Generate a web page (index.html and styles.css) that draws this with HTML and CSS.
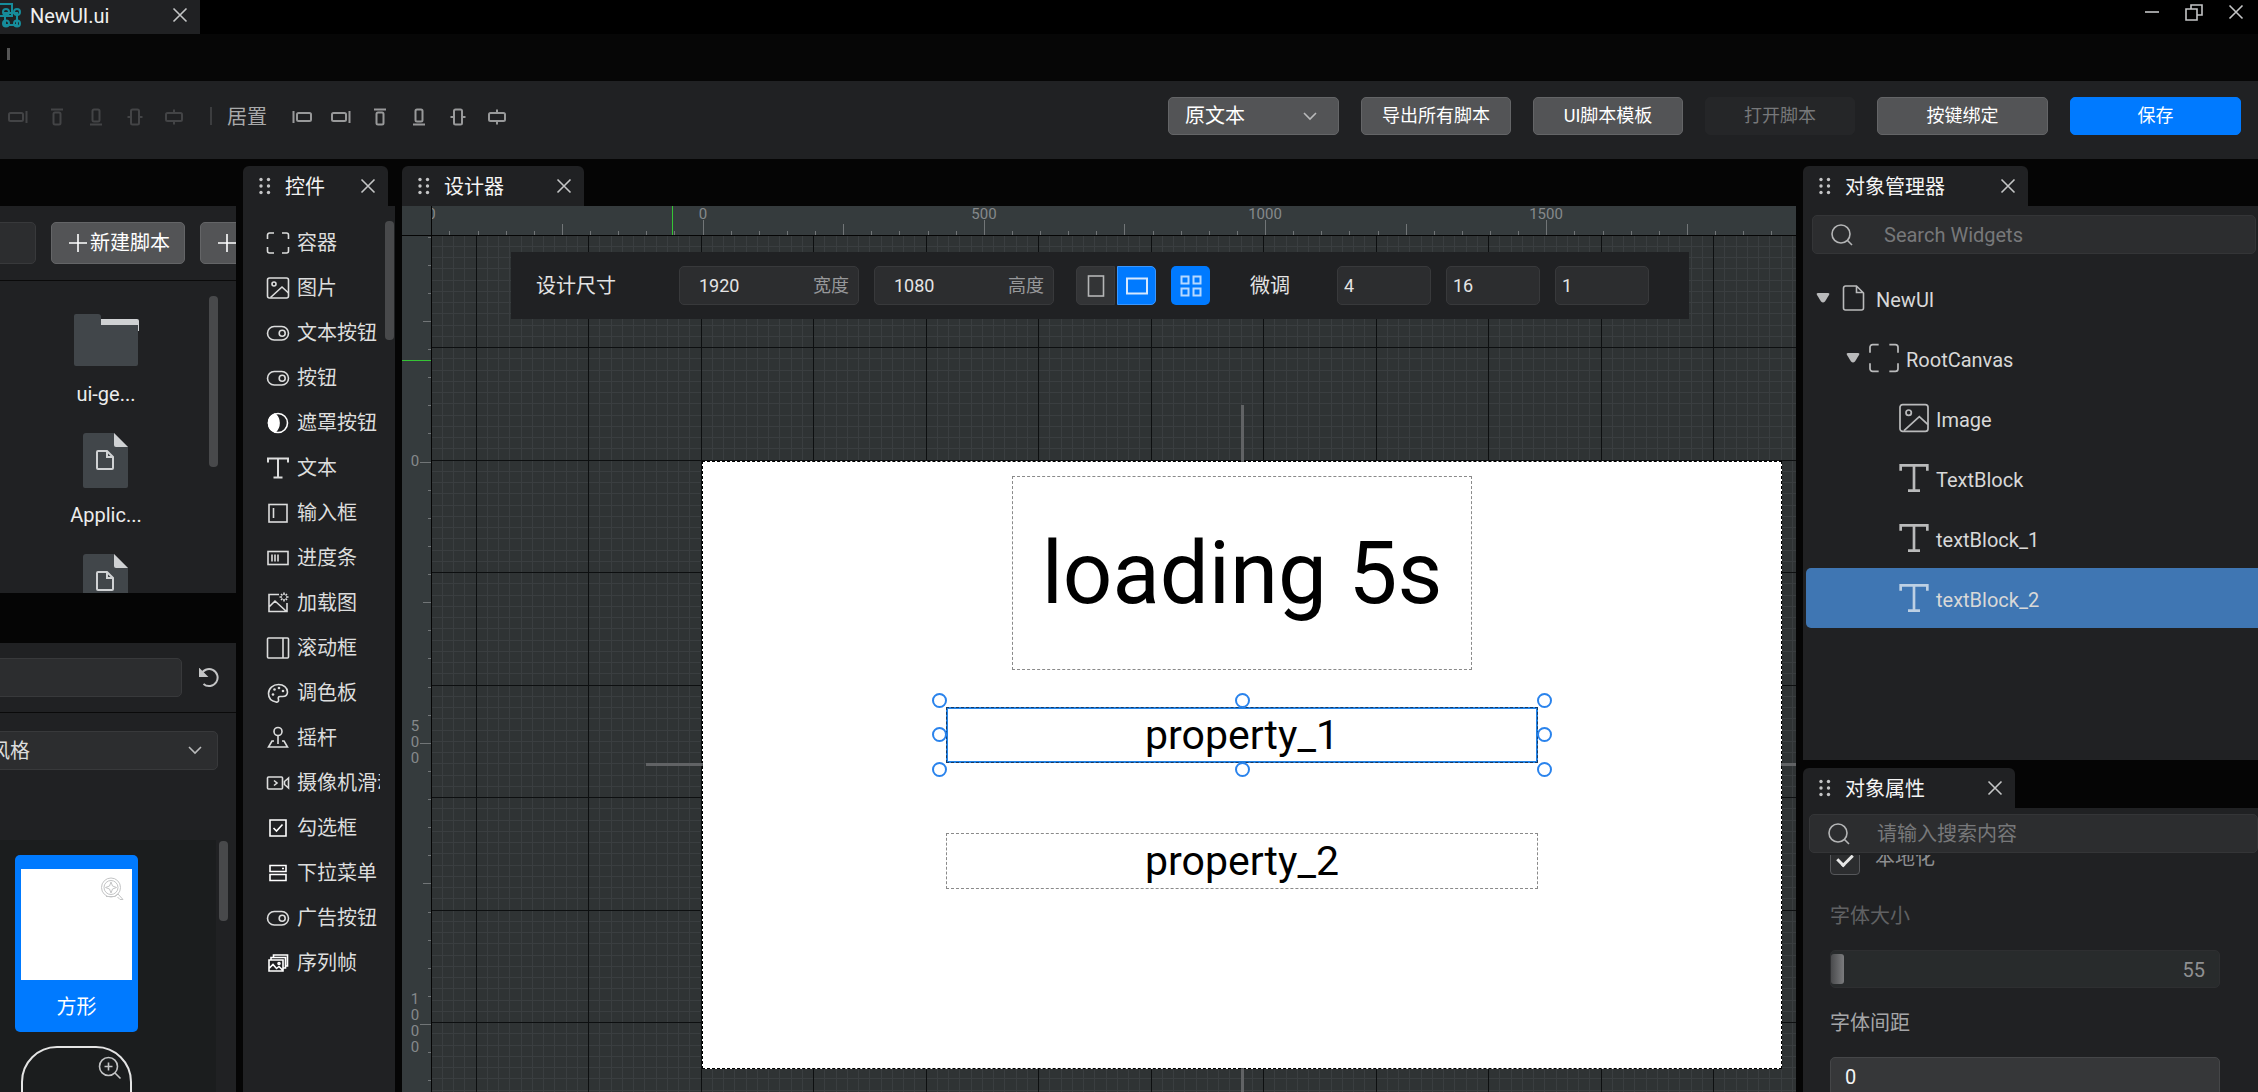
FILE: index.html
```html
<!DOCTYPE html>
<html lang="zh-CN">
<head>
<meta charset="utf-8">
<meta name="viewport" content="width=device-width, initial-scale=1">
<title>NewUI.ui</title>
<link rel="stylesheet" href="styles.css">
</head>
<body>
<svg class="sprite" aria-hidden="true">
  <symbol id="i-close" viewBox="0 0 16 16"><path d="M1.500 1.500l13 13M14.500 1.500l-13 13"/></symbol>
  <symbol id="i-grip" viewBox="0 0 12 18"><g fill="currentColor" stroke="none"><circle cx="2" cy="2.500" r="1.700"/><circle cx="9.500" cy="2.500" r="1.700"/><circle cx="2" cy="9" r="1.700"/><circle cx="9.500" cy="9" r="1.700"/><circle cx="2" cy="15.500" r="1.700"/><circle cx="9.500" cy="15.500" r="1.700"/></g></symbol>
  <symbol id="i-chevron" viewBox="0 0 16 16"><path d="M2 5l6 6 6-6"/></symbol>
  <symbol id="i-search" viewBox="0 0 24 24"><circle cx="11" cy="11" r="9"/><path d="M17.500 17.500l4.500 4.500"/></symbol>
  <symbol id="i-plus" viewBox="0 0 20 20"><path d="M10 1v18M1 10h18"/></symbol>
  <symbol id="i-left" viewBox="0 0 20 20"><path d="M1.500 4v12"/><rect x="5" y="6" width="14" height="8" rx="1.500"/></symbol>
  <symbol id="i-right" viewBox="0 0 20 20"><path d="M18.500 4v12"/><rect x="1" y="6" width="14" height="8" rx="1.500"/></symbol>
  <symbol id="i-top" viewBox="0 0 20 20"><path d="M4 2.500h12"/><rect x="6.500" y="5.500" width="7" height="12" rx="1.500"/></symbol>
  <symbol id="i-bottom" viewBox="0 0 20 20"><path d="M4 17.500h12"/><rect x="6.500" y="2.500" width="7" height="12" rx="1.500"/></symbol>
  <symbol id="i-hcenter" viewBox="0 0 20 20"><path d="M2.500 10H6M14 10h3.500"/><rect x="6" y="2.500" width="8" height="15" rx="1.500"/></symbol>
  <symbol id="i-vcenter" viewBox="0 0 20 20"><path d="M10 2.500V6M10 14v3.500"/><rect x="2" y="6" width="16" height="8" rx="1.500"/></symbol>
  <symbol id="i-frame" viewBox="0 0 24 24"><path d="M1.500 8V4a2 2 0 0 1 2-2H8M16 2h4.500a2 2 0 0 1 2 2v4M22.500 16v4a2 2 0 0 1-2 2H16M8 22H3.500a2 2 0 0 1-2-2v-4"/></symbol>
  <symbol id="i-image" viewBox="0 0 24 24"><rect x="1.500" y="2" width="21" height="20" rx="2"/><circle cx="8" cy="8" r="2"/><path d="M4.500 21.500L16 11l6.500 6"/></symbol>
  <symbol id="i-toggle" viewBox="0 0 24 24"><rect x="1.500" y="5.500" width="21" height="13.500" rx="6.700"/><circle cx="16.200" cy="12.200" r="3"/></symbol>
  <symbol id="i-mask" viewBox="0 0 24 24"><circle cx="12" cy="12" r="9.500"/><path fill="currentColor" d="M9 3a9.500 9.500 0 0 0 0 18 12 12 0 0 0 0-18z"/></symbol>
  <symbol id="i-text" viewBox="0 0 24 24"><path stroke-width="2" d="M2 6.500V2.500h20v4M12 2.500v19M7.500 21.500h9"/></symbol>
  <symbol id="i-input" viewBox="0 0 24 24"><rect x="3" y="3.500" width="18" height="17.500"/><path d="M7.500 7v10"/></symbol>
  <symbol id="i-progress" viewBox="0 0 24 24"><rect x="2" y="5.500" width="20" height="13"/><path d="M6 8.500v7M9 8.500v7M12 8.500v7"/></symbol>
  <symbol id="i-loading" viewBox="0 0 24 24"><path d="M13 3.500H3V20.500h18V12M3 16l6-6 11 10M18 1.500v2.500M18 8v2.500M13.500 6h2.500M20 6h2.500M15 3l1.500 1.500M19.500 7.500L21 9M21 3l-1.500 1.500M16.500 7.500L15 9"/></symbol>
  <symbol id="i-scrollbox" viewBox="0 0 24 24"><rect x="1.500" y="2" width="21" height="20" rx="1"/><path d="M17 2v20"/></symbol>
  <symbol id="i-palette" viewBox="0 0 24 24"><path d="M10 21C5 20 2.500 16.500 2.500 12.500 2.500 7.500 7 3.500 12.500 3.500c5 0 9 3 9 7.500 0 3-2 4.500-5 4.500h-2.500c-2 0-2 1.500-1.500 3 .5 2-1 3-2.500 2.500z"/><g fill="currentColor" stroke="none"><circle cx="7" cy="13.500" r="1.300"/><circle cx="8.500" cy="8.500" r="1.300"/><circle cx="13" cy="7" r="1.300"/><circle cx="17" cy="10" r="1.300"/></g></symbol>
  <symbol id="i-stick" viewBox="0 0 24 24"><circle cx="12" cy="5.500" r="4"/><path d="M12 9.500V18M8 15H6l-3.500 6h19L18 15h-2"/></symbol>
  <symbol id="i-camera" viewBox="0 0 24 24"><rect x="1.500" y="6" width="15" height="12" rx="1"/><path d="M22.500 7l-4 3.500v3l4 3.500zM8 9.500l3 2.500-3 2.500"/></symbol>
  <symbol id="i-check" viewBox="0 0 24 24"><path d="M4 4h16v16H4zM7.500 12l3 3 6-6.500"/></symbol>
  <symbol id="i-dropdown" viewBox="0 0 24 24"><path d="M4 4.500h16v6H4zM4 13.500h16v6H4zM16 7.500h2"/></symbol>
  <symbol id="i-sequence" viewBox="0 0 24 24"><path d="M3 9h14v11H3zM5 9V6.500h14.500V17H17M7.500 6.500V4H21.500v11h-2M3 17.500l4-4 3.500 4 2.500-2 4 4"/><circle cx="13" cy="12.500" r="1"/></symbol>
  <symbol id="i-file" viewBox="0 0 24 28"><path d="M3.500 2h11l7 7v15a2 2 0 0 1-2 2h-16a2 2 0 0 1-2-2V4a2 2 0 0 1 2-2zM14.500 2v6.500h7"/></symbol>
  <symbol id="i-arrow" viewBox="0 0 14 12"><path fill="currentColor" stroke="none" d="M2 1h10q2 0 1 2L9 9.500q-2 2-4 0L1 3q-1-2 1-2z"/></symbol>
  <symbol id="i-zoomin" viewBox="0 0 24 24"><circle cx="10.500" cy="10.500" r="9"/><path d="M17 17l5.500 5.500M10.500 6.500v8M6.500 10.500h8"/></symbol>
  <symbol id="i-zoomstar" viewBox="0 0 24 24"><circle cx="11" cy="10.500" r="9.500"/><circle cx="11" cy="10.500" r="7"/><path d="M11 5l1.500 4 4 1.500-4 1.500-1.500 4-1.500-4-4-1.500 4-1.500zM6 19.500h9l3-2.500 5 5.500h-3l-2.500-2.500"/></symbol>
  <symbol id="i-doc" viewBox="0 0 46 56"><path fill="#41464a" stroke="none" d="M3 0h28l14 14v39a2 2 0 0 1-2 2H2a2 2 0 0 1-2-2V3a3 3 0 0 1 3-3z"/><path fill="#cfd1d3" stroke="none" d="M31 0l14 14H33a2 2 0 0 1-2-2z"/><path stroke="#d0d2d4" stroke-width="2" d="M15 18h9l6 6v11a1 1 0 0 1-1 1H15a1 1 0 0 1-1-1V19a1 1 0 0 1 1-1zM24 18v6h6"/></symbol>
</svg>

<div class="app">
  <header class="titlebar">
    <div class="file-tab">
      <svg class="logo" viewBox="0 0 22 28"><path d="M0 3h12v12H0M5 12h12v12H5z"/><circle cx="6" cy="11" r="3"/><circle cx="17" cy="11" r="3"/><circle cx="6" cy="22.500" r="3"/><circle cx="17" cy="22.500" r="3"/></svg>
      <span>NewUI.ui</span>
      <button class="icon-btn" aria-label="关闭"><svg class="icon s16"><use href="#i-close"/></svg></button>
    </div>
    <div class="window-btns">
      <button class="icon-btn" aria-label="最小化"><svg class="icon s16" viewBox="0 0 16 16"><path d="M1 8h14"/></svg></button>
      <button class="icon-btn" aria-label="还原"><svg class="icon s18" viewBox="0 0 18 18"><path d="M1 6h11v11H1zM6 6V2h11v10h-5"/></svg></button>
      <button class="icon-btn" aria-label="关闭窗口"><svg class="icon s16"><use href="#i-close"/></svg></button>
    </div>
  </header>
  <div class="menubar"><i></i></div>

  <div class="toolbar">
    <div class="align-group">
      <button class="icon-btn" disabled aria-label="右对齐"><svg class="icon s20"><use href="#i-right"/></svg></button>
      <button class="icon-btn" disabled aria-label="上对齐"><svg class="icon s20"><use href="#i-top"/></svg></button>
      <button class="icon-btn" disabled aria-label="下对齐"><svg class="icon s20"><use href="#i-bottom"/></svg></button>
      <button class="icon-btn" disabled aria-label="水平居中"><svg class="icon s20"><use href="#i-hcenter"/></svg></button>
      <button class="icon-btn" disabled aria-label="垂直居中"><svg class="icon s20"><use href="#i-vcenter"/></svg></button>
    </div>
    <i class="divider"></i>
    <span class="align-label">居置</span>
    <div class="align-group">
      <button class="icon-btn" aria-label="居左"><svg class="icon s20"><use href="#i-left"/></svg></button>
      <button class="icon-btn" aria-label="居右"><svg class="icon s20"><use href="#i-right"/></svg></button>
      <button class="icon-btn" aria-label="居上"><svg class="icon s20"><use href="#i-top"/></svg></button>
      <button class="icon-btn" aria-label="居下"><svg class="icon s20"><use href="#i-bottom"/></svg></button>
      <button class="icon-btn" aria-label="水平居中"><svg class="icon s20"><use href="#i-hcenter"/></svg></button>
      <button class="icon-btn" aria-label="垂直居中"><svg class="icon s20"><use href="#i-vcenter"/></svg></button>
    </div>
    <div class="actions">
      <div class="select-wrap wide"><select class="btn select" aria-label="语言"><option>原文本</option></select><svg class="icon s16"><use href="#i-chevron"/></svg></div>
      <button class="btn">导出所有脚本</button>
      <button class="btn">UI脚本模板</button>
      <button class="btn" disabled>打开脚本</button>
      <button class="btn wide">按键绑定</button>
      <button class="btn wide primary">保存</button>
    </div>
  </div>

  <main class="workspace">
    <div class="left-col">
      <section class="assets">
        <div class="assets-head">
          <input class="field clipped" type="text" aria-label="搜索资源">
          <button class="btn add"><svg class="icon s20"><use href="#i-plus"/></svg>新建脚本</button>
          <button class="btn add" aria-label="新建"><svg class="icon s20"><use href="#i-plus"/></svg></button>
        </div>
        <div class="assets-body">
          <ul class="asset-list">
            <li><svg class="folder" viewBox="0 0 66 52"><path fill="#cfd1d3" d="M28 5h36a2 2 0 0 1 2 2v10H28z"/><path fill="#41464a" d="M3 0h22a3 3 0 0 1 3 3v8h37v39a2 2 0 0 1-2 2H3a2 2 0 0 1-2-2V2a2 2 0 0 1 2-2z"/></svg><span>ui-ge...</span></li>
            <li><svg class="doc"><use href="#i-doc"/></svg><span>Applic...</span></li>
            <li><svg class="doc"><use href="#i-doc"/></svg></li>
          </ul>
          <i class="scrollbar s-assets"></i>
        </div>
      </section>
      <section class="styles">
        <div class="styles-head">
          <input class="field" type="text" aria-label="搜索样式">
          <button class="icon-btn" aria-label="刷新"><svg class="icon s20 bold" viewBox="0 0 20 20"><path d="M1 2v6h6M2 7a8.500 8.500 0 1 1 2.500 9"/><path fill="currentColor" d="M1 2v6h6z"/></svg></button>
        </div>
        <div class="styles-filter">
          <div class="select-wrap"><select class="select field" aria-label="风格"><option>全部风格</option></select><svg class="icon s16"><use href="#i-chevron"/></svg></div>
        </div>
        <div class="styles-body">
          <div class="shape-list">
            <button class="shape selected"><span class="thumb square"><svg class="icon s24 light"><use href="#i-zoomstar"/></svg></span>方形</button>
            <button class="shape" aria-label="圆角"><span class="thumb round"><svg class="icon s24"><use href="#i-zoomin"/></svg></span></button>
          </div>
          <i class="scrollbar s-styles"></i>
        </div>
      </section>
    </div>

    <section class="panel widgets">
      <div class="tab"><svg class="grip"><use href="#i-grip"/></svg><span>控件</span><button class="icon-btn" aria-label="关闭控件"><svg class="icon s16"><use href="#i-close"/></svg></button></div>
      <div class="panel-body widgets-body">
        <ul class="widget-list">
          <li><svg class="icon s24"><use href="#i-frame"/></svg><span>容器</span></li>
          <li><svg class="icon s24"><use href="#i-image"/></svg><span>图片</span></li>
          <li><svg class="icon s24"><use href="#i-toggle"/></svg><span>文本按钮</span></li>
          <li><svg class="icon s24"><use href="#i-toggle"/></svg><span>按钮</span></li>
          <li><svg class="icon s24 white"><use href="#i-mask"/></svg><span>遮罩按钮</span></li>
          <li><svg class="icon s24"><use href="#i-text"/></svg><span>文本</span></li>
          <li><svg class="icon s24"><use href="#i-input"/></svg><span>输入框</span></li>
          <li><svg class="icon s24"><use href="#i-progress"/></svg><span>进度条</span></li>
          <li><svg class="icon s24"><use href="#i-loading"/></svg><span>加载图</span></li>
          <li><svg class="icon s24"><use href="#i-scrollbox"/></svg><span>滚动框</span></li>
          <li><svg class="icon s24"><use href="#i-palette"/></svg><span>调色板</span></li>
          <li><svg class="icon s24"><use href="#i-stick"/></svg><span>摇杆</span></li>
          <li><svg class="icon s24"><use href="#i-camera"/></svg><span>摄像机滑动</span></li>
          <li><svg class="icon s24 white"><use href="#i-check"/></svg><span>勾选框</span></li>
          <li><svg class="icon s24 white"><use href="#i-dropdown"/></svg><span>下拉菜单</span></li>
          <li><svg class="icon s24"><use href="#i-toggle"/></svg><span>广告按钮</span></li>
          <li><svg class="icon s24 white"><use href="#i-sequence"/></svg><span>序列帧</span></li>
        </ul>
        <i class="scrollbar s-widgets"></i>
      </div>
    </section>

    <section class="panel designer">
      <div class="tab"><svg class="grip"><use href="#i-grip"/></svg><span>设计器</span><button class="icon-btn" aria-label="关闭设计器"><svg class="icon s16"><use href="#i-close"/></svg></button></div>
      <div class="design-area">
        <div class="corner"></div>
        <svg class="ruler ruler-x" id="ruler-x"></svg>
        <svg class="ruler ruler-y" id="ruler-y"></svg>
        <div class="viewport">
          <svg class="grid" id="grid"></svg>
          <div class="stage">
            <i class="axis north"></i><i class="axis south"></i><i class="axis west"></i><i class="axis east"></i>
            <div class="node title">loading 5s</div>
            <div class="node prop one">property_1
              <i class="h nw"></i><i class="h n"></i><i class="h ne"></i><i class="h w"></i><i class="h e"></i><i class="h sw"></i><i class="h s"></i><i class="h se"></i>
            </div>
            <div class="node prop two">property_2</div>
          </div>
        </div>
        <form class="size-bar">
          <span class="size-label">设计尺寸</span>
          <label class="unit-field"><input type="text" value="1920"><span>宽度</span></label>
          <label class="unit-field"><input type="text" value="1080"><span>高度</span></label>
          <div class="seg">
            <button type="button" aria-label="竖屏"><svg class="icon s24" viewBox="0 0 24 24"><rect x="4.500" y="2" width="15" height="20"/></svg></button>
            <button type="button" class="on" aria-label="横屏"><svg class="icon s24 thick" viewBox="0 0 24 24"><rect x="2" y="4.500" width="20" height="15"/></svg></button>
          </div>
          <button type="button" class="grid-btn" aria-label="网格"><svg class="icon s24 thick" viewBox="0 0 24 24"><path d="M2.500 2.500h7v7h-7zM14.500 2.500h7v7h-7zM2.500 14.500h7v7h-7zM14.500 14.500h7v7h-7z"/></svg></button>
          <span class="snap-label">微调</span>
          <input class="field snap" type="text" value="4" aria-label="微调 4">
          <input class="field snap" type="text" value="16" aria-label="微调 16">
          <input class="field snap" type="text" value="1" aria-label="微调 1">
        </form>
      </div>
    </section>

    <div class="right-col">
      <section class="panel objects">
        <div class="tab"><svg class="grip"><use href="#i-grip"/></svg><span>对象管理器</span><button class="icon-btn" aria-label="关闭对象管理器"><svg class="icon s16"><use href="#i-close"/></svg></button></div>
        <div class="panel-body">
          <label class="search"><svg class="icon s24"><use href="#i-search"/></svg><input type="text" placeholder="Search Widgets"></label>
          <ul class="tree">
            <li class="l0"><svg class="icon arrow"><use href="#i-arrow"/></svg><svg class="icon file"><use href="#i-file"/></svg><span>NewUI</span></li>
            <li class="l1"><svg class="icon arrow"><use href="#i-arrow"/></svg><svg class="icon s32"><use href="#i-frame"/></svg><span>RootCanvas</span></li>
            <li class="l2"><svg class="icon s32"><use href="#i-image"/></svg><span>Image</span></li>
            <li class="l2"><svg class="icon s32"><use href="#i-text"/></svg><span>TextBlock</span></li>
            <li class="l2"><svg class="icon s32"><use href="#i-text"/></svg><span>textBlock_1</span></li>
            <li class="l2 selected"><svg class="icon s32"><use href="#i-text"/></svg><span>textBlock_2</span></li>
          </ul>
        </div>
      </section>
      <section class="panel props">
        <div class="tab"><svg class="grip"><use href="#i-grip"/></svg><span>对象属性</span><button class="icon-btn" aria-label="关闭对象属性"><svg class="icon s16"><use href="#i-close"/></svg></button></div>
        <div class="panel-body">
          <label class="search"><svg class="icon s24"><use href="#i-search"/></svg><input type="text" placeholder="请输入搜索内容"></label>
          <div class="prop-list">
            <label class="check"><input type="checkbox" checked>本地化</label>
            <label class="prop-label dim" for="font-size">字体大小</label>
            <div class="slider"><input id="font-size" type="range" min="0" max="2000" value="0" disabled><output for="font-size">55</output></div>
            <label class="prop-label" for="spacing">字体间距</label>
            <input class="field number" id="spacing" type="text" value="0">
          </div>
        </div>
      </section>
    </div>
  </main>
</div>
<script src="designer.js"></script>
</body>
</html>
```
FILE: styles.css
```css
* { box-sizing: border-box; }

body {
  margin: 0;
  background: #050505;
  color: #dcdddd;
  font: 20px/28px Roboto, "Noto Sans CJK SC", sans-serif;
}

button, input, select, output { font: inherit; color: inherit; }
button { cursor: pointer; }
ul { list-style: none; margin: 0; padding: 0; }
i { display: block; }

.sprite { position: absolute; width: 0; height: 0; }
.icon { display: block; flex: none; fill: none; stroke: currentColor; stroke-width: 1.600; }
.s16 { width: 16px; height: 16px; }
.s18 { width: 18px; height: 18px; }
.s20 { width: 20px; height: 20px; }
.s24 { width: 24px; height: 24px; }
.s32 { width: 32px; height: 32px; }
.bold, .thick { stroke-width: 2; }
.light { stroke-width: 1; }
.white { color: #fff; }

.icon-btn { padding: 0; border: 0; background: none; color: #c4c5c6; }

.app { display: flex; flex-direction: column; height: 100vh; overflow: hidden; }

/* title and menu rows */
.titlebar { display: flex; justify-content: space-between; height: 34px; background: #000; }
.file-tab { display: flex; align-items: center; width: 200px; padding: 0 12px 4px 0; background: #202123; color: #f0f0f0; }
.file-tab span { padding-top: 2px; }
.logo { width: 22px; height: 28px; margin-right: 8px; fill: none; stroke: #168c9b; stroke-width: 2; }
.file-tab .icon-btn { margin-left: auto; }
.window-btns { display: flex; align-items: center; gap: 25px; padding: 0 14px 10px 0; }
.menubar { height: 47px; padding: 14px 7px; background: #060606; }
.menubar i { width: 3px; height: 12px; background: #555; }

/* toolbar */
.toolbar { display: flex; align-items: center; height: 78px; padding: 0 17px 8px 8px; background: #202123; }
.align-group { display: flex; gap: 19px; padding-top: 2px; }
.align-group .icon { stroke-width: 2; }
.align-group .icon-btn { color: #98999a; }
.align-group .icon-btn:disabled { color: #434446; }
.divider { width: 2px; height: 18px; margin: 0 15px 0 26px; background: #3c3d3f; }
.align-label { margin-right: 25px; padding-top: 2px; color: #a8a9aa; }
.actions { display: flex; gap: 22px; margin-left: auto; }

.btn {
  width: 150px;
  height: 38px;
  padding: 0;
  border: 1px solid #646567;
  border-radius: 5px;
  background: #535456;
  color: #fff;
  font-size: 18px;
  white-space: nowrap;
}
.btn:disabled { border-color: #252628; background: #252628; color: #77787a; }
.wide { width: 171px; }
.primary { border-color: #007aff; background: #007aff; }
.select-wrap { position: relative; }
.select-wrap .icon { position: absolute; right: 21px; top: 11px; color: #b9babb; pointer-events: none; }
.select { width: 100%; appearance: none; font-size: 20px; }
.btn.select { padding: 0 16px; }

/* workspace */
.workspace {
  display: grid;
  grid-template-columns: 236px 152px minmax(0, 1fr) 455px;
  gap: 7px;
  flex: 1;
  min-height: 0;
}
.workspace > * { min-height: 0; }
.field { border: 1px solid #38393b; border-radius: 5px; background: #2c2d2f; }
.scrollbar { flex: none; width: 9px; border-radius: 4px; background: #48494b; }

.panel { display: flex; flex-direction: column; min-height: 0; }
.widgets, .designer, .right-col { padding-top: 7px; }
.tab {
  display: flex;
  flex: none;
  align-items: center;
  height: 40px;
  padding: 0 12px 0 16px;
  border-radius: 6px 6px 0 0;
  background: #202123;
  color: #f4f4f4;
}
.tab span { padding-top: 2px; }
.tab .icon-btn { margin-left: auto; }
.grip { width: 12px; height: 18px; margin-right: 14px; color: #c4c5c6; }
.panel-body { flex: 1; min-height: 0; overflow: hidden; background: #202123; }
.widgets .tab { width: 145px; }
.designer .tab { width: 182px; }
.objects .tab { width: 225px; }
.props .tab { width: 212px; }

/* assets and style presets */
.left-col { display: flex; flex-direction: column; gap: 50px; padding-top: 47px; }
.assets, .styles { display: flex; flex-direction: column; min-height: 0; overflow: hidden; background: #202123; }
.assets { flex: 387 1 0; }
.styles { flex: 449 1 0; }
.assets-head { display: flex; align-items: center; flex: none; gap: 15px; height: 75px; border-bottom: 1px solid #0a0a0a; }
.clipped { flex: none; width: 180px; height: 42px; margin-left: -144px; }
.add { display: flex; flex: none; align-items: center; gap: 2px; width: 134px; height: 42px; padding-left: 16px; font-size: 20px; }
.assets-body { display: flex; flex: 1; min-height: 0; padding-right: 18px; }
.asset-list { flex: 1; padding: 31px 0 0 3px; }
.asset-list li { display: flex; flex-direction: column; align-items: center; justify-content: flex-start; gap: 12px; height: 121px; color: #ececec; }
.folder { width: 66px; height: 56px; flex: none; }
.doc { width: 46px; height: 56px; flex: none; fill: none; }
.s-assets { height: 171px; margin-top: 15px; }
.styles-head { display: flex; align-items: center; flex: none; gap: 17px; height: 70px; border-bottom: 1px solid #0a0a0a; }
.styles-head .field { width: 192px; height: 39px; margin-left: -10px; }
.styles-filter { flex: none; height: 127px; padding: 18px 18px 0 0; }
.styles-filter .select-wrap { margin-left: -70px; }
.styles-filter .select-wrap .icon { right: 15px; }
.styles-filter .select { display: block; height: 39px; padding: 0 19px; }
.styles-body { display: flex; flex: 1; min-height: 0; gap: 3px; }
.shape-list { display: flex; flex: none; flex-direction: column; align-items: flex-start; width: 216px; padding: 15px; background: #1b1d1e; }
.s-styles { height: 80px; margin-top: 1px; }
.shape { display: flex; flex: none; flex-direction: column; align-items: center; gap: 13px; width: 123px; height: 177px; padding: 14px 6px 0; border: 0; border-radius: 5px; background: none; color: #fff; }
.shape.selected { background: #007aff; }
.thumb { display: flex; justify-content: flex-end; width: 100%; height: 111px; padding: 8px; color: #c3c4c5; }
.square { background: #fff; }
.round { border: 2px solid #e4e4e4; border-radius: 36px; }

/* widget palette */
.widgets-body { display: flex; padding: 14px 1px 0 23px; }
.widget-list { flex: 1; min-width: 0; padding-right: 5px; }
.widget-list li { display: flex; align-items: center; gap: 7px; height: 45px; overflow: hidden; white-space: nowrap; }
.s-widgets { height: 119px; margin-top: 1px; }

/* designer */
.design-area {
  position: relative;
  display: grid;
  grid-template: 30px minmax(0, 1fr) / 30px minmax(0, 1fr);
  flex: 1;
  min-height: 0;
}
.corner, .ruler { border: 0 solid #050505; background: #353b3d; }
.corner { border-width: 0 1px 1px 0; }
.ruler { width: 100%; height: 100%; overflow: hidden; }
.ruler-x { border-bottom-width: 1px; }
.ruler-y { border-right-width: 1px; }
.ruler .tick { stroke: #717577; }
.ruler .cursor { stroke: #35c435; stroke-width: 1; }
.ruler text { fill: #85898b; font-size: 15px; text-anchor: middle; }
.viewport { position: relative; overflow: hidden; background: #2f3334; }
.grid { display: block; width: 100%; height: 100%; fill: none; }
.grid .minor { stroke: #3a3e40; }
.grid .major { stroke: #0d0f10; }
.stage {
  position: absolute;
  left: 270px;
  top: 225px;
  width: 1080px;
  height: 608px;
  border: 1px dashed #000;
  background: #fff;
  color: #000;
}
.node { position: absolute; display: flex; align-items: center; justify-content: center; border: 1px dashed #8a8a8a; }
.title { left: 309px; top: 14px; width: 460px; height: 194px; font-size: 87px; line-height: 100px; }
.prop { left: 243px; width: 592px; height: 56px; font-size: 41px; line-height: 48px; }
.one { top: 245px; border: 2px solid #2383e6; outline: 1px dashed #173a63; outline-offset: -1px; }
.two { top: 371px; }
.h { position: absolute; width: 15px; height: 15px; border: 2px solid #2a83ec; border-radius: 50%; background: #fff; }
.nw, .n, .ne { top: -16px; }
.w, .e { top: 18px; }
.sw, .s, .se { bottom: -16px; }
.nw, .w, .sw { left: -16px; }
.n, .s { left: 287px; }
.ne, .e, .se { right: -16px; }
.axis { position: absolute; background: #616365; }
.north, .south { left: 538px; width: 3px; height: 57px; }
.north { bottom: 100%; }
.south { top: 100%; }
.west, .east { top: 301px; width: 57px; height: 3px; }
.west { right: 100%; }
.east { left: 100%; }

.size-bar {
  position: absolute;
  left: 109px;
  right: 107px;
  top: 46px;
  display: flex;
  align-items: center;
  height: 67px;
  padding-left: 25px;
  background: #202123;
  color: #e4e4e4;
  white-space: nowrap;
}
.size-bar > * { flex: none; }
.size-label { margin-right: 63px; }
.unit-field {
  display: flex;
  align-items: center;
  width: 180px;
  height: 39px;
  margin-right: 15px;
  padding: 0 9px 0 19px;
  border: 1px solid #38393b;
  border-radius: 5px;
  background: #2c2d2f;
  font-size: 18px;
}
.unit-field input { flex: 1; width: 0; padding: 0; border: 0; background: none; }
.unit-field span { color: #97989a; }
.seg { display: flex; gap: 2px; margin: 0 15px 0 7px; }
.seg button, .grid-btn { display: grid; place-items: center; width: 39px; height: 39px; padding: 0; border: 1px solid #3a3b3d; background: #333436; color: #b4b5b6; }
.seg button:first-child { border-radius: 5px 0 0 5px; }
.seg .on { border-color: #3a97ff; border-radius: 0 5px 5px 0; background: #007aff; color: #d5e8ff; }
.grid-btn { border: 0; border-radius: 5px; background: #007aff; color: #b5d8ff; }
.snap-label { margin: 0 47px 0 40px; }
.snap { width: 94px; height: 39px; margin-right: 15px; padding: 0 6px; font-size: 18px; }

/* object tree and properties */
.right-col { display: flex; flex-direction: column; gap: 8px; }
.objects { flex: 594 1 0; }
.props { flex: 324 1 0; }
.search {
  display: flex;
  align-items: center;
  gap: 30px;
  height: 39px;
  margin: 9px 2px 14px 9px;
  padding: 0 17px;
  border: 1px solid #343537;
  border-radius: 5px;
  background: #2c2d2f;
  color: #b4b5b6;
}
.search input { flex: 1; min-width: 0; padding: 0; border: 0; background: none; }
.search input::placeholder { color: #77787a; opacity: 1; }
.tree li { display: flex; align-items: center; height: 60px; margin-left: 3px; border-radius: 5px 0 0 5px; color: #d8d8d8; }
.tree span { padding-top: 3px; }
.tree .icon { color: #b9babb; }
.arrow { width: 14px; height: 12px; }
.file { width: 24px; height: 28px; margin: 0 10px 0 12px; }
.l0 { padding-left: 10px; }
.l1 { padding-left: 40px; }
.l2 { padding-left: 92px; }
.tree .s32 { margin-right: 6px; stroke-width: 1.300; }
.l1 .s32 { margin-left: 8px; }
.tree .selected { background: #3f76b3; }
.tree .selected .icon { color: #bdd0e4; }

.props .search { gap: 26px; margin: 6px 0 2px 6px; }
.props .panel-body { display: flex; flex-direction: column; }
.prop-list { display: flex; flex: 1; flex-direction: column; min-height: 0; padding: 0 38px 0 27px; overflow: hidden; }
.prop-list > * { flex: none; }
.check { display: flex; align-items: center; gap: 15px; height: 38px; margin-top: -16px; color: #8d8e90; }
.check input { display: grid; place-items: center; width: 30px; height: 30px; margin: 4px 0 0; border: 1px solid #56575a; border-radius: 4px; background: #2c2d2f; appearance: none; }
.check input::after { content: ""; width: 7px; height: 12px; margin-top: -3px; border: solid #e6e6e6; border-width: 0 3px 3px 0; transform: rotate(45deg); }
.prop-label { margin-top: 21px; color: #a5a6a8; }
.prop-label.dim { margin-top: 25px; color: #606163; }
.slider { position: relative; display: flex; height: 38px; margin-top: 20px; border: 1px solid #2e2f31; border-radius: 5px; background: #282b2c; }
.slider input { flex: 1; min-width: 0; margin: 0; background: none; appearance: none; }
.slider input::-webkit-slider-thumb { width: 13px; height: 30px; border-radius: 3px; background: linear-gradient(90deg, #4a4b4d, #7b7c7e); appearance: none; }
.slider output { position: absolute; right: 14px; top: 5px; color: #8f9092; }
.number { width: 100%; height: 39px; margin-top: 20px; padding: 0 14px; border-color: #454648; background: #363739; color: #f4f4f4; }
```
FILE: designer.js
```js
// Draws the rulers and the background grid of the design canvas.
const ZOOM = 0.5625;
const ORIGIN = { x: 270, y: 225 };
const CURSOR = { x: 240.5, y: 124.5 };
const SVG = "http://www.w3.org/2000/svg";

function add(parent, name, attrs, text) {
  const el = document.createElementNS(SVG, name);
  for (const key in attrs) el.setAttribute(key, attrs[key]);
  if (text !== undefined) el.textContent = text;
  parent.appendChild(el);
}

function positions(origin, length, step) {
  const list = [];
  for (let n = Math.ceil(-origin / ZOOM / step) - 1; origin + n * step * ZOOM < length + 40; n++) {
    list.push({ value: n * step, at: Math.floor(origin + n * step * ZOOM) });
  }
  return list;
}

function drawRuler(svg, origin, length, vertical) {
  svg.replaceChildren();
  let d = "";
  for (const { value, at } of positions(origin + 1, length, 50)) {
    const size = value % 500 === 0 ? (vertical ? 11 : 15) : value % 250 === 0 ? (vertical ? 8 : 11) : vertical ? 3 : 4;
    d += vertical ? `M${29 - size} ${at + 0.5}h${size}` : `M${at + 0.5} ${29 - size}v${size}`;
  }
  add(svg, "path", { class: "tick", d });
  for (const { value, at } of positions(origin, length, 500)) {
    if (!vertical) {
      add(svg, "text", { x: at + 1, y: 13 }, String(value));
    } else {
      const digits = String(Math.abs(value)).split("");
      digits.forEach((digit, i) => {
        add(svg, "text", { x: 13, y: at + 5 + 16 * i - 8 * (digits.length - 1) }, digit);
      });
    }
  }
  const c = vertical ? `M0 ${CURSOR.y}h30` : `M${CURSOR.x} 0v30`;
  add(svg, "path", { class: "cursor", d: c });
}

function drawGrid(svg) {
  svg.replaceChildren();
  const w = svg.clientWidth, h = svg.clientHeight;
  for (const [name, step] of [["minor", 20], ["major", 200]]) {
    let d = "";
    for (const { at } of positions(ORIGIN.x, w, step)) d += `M${at - 0.5} 0v${h}`;
    for (const { at } of positions(ORIGIN.y, h, step)) d += `M0 ${at - 0.5}h${w}`;
    add(svg, "path", { class: name, d });
  }
}

function draw() {
  const grid = document.getElementById("grid");
  drawGrid(grid);
  drawRuler(document.getElementById("ruler-x"), ORIGIN.x, grid.clientWidth, false);
  drawRuler(document.getElementById("ruler-y"), ORIGIN.y, grid.clientHeight, true);
}

draw();
window.addEventListener("resize", draw);
```
